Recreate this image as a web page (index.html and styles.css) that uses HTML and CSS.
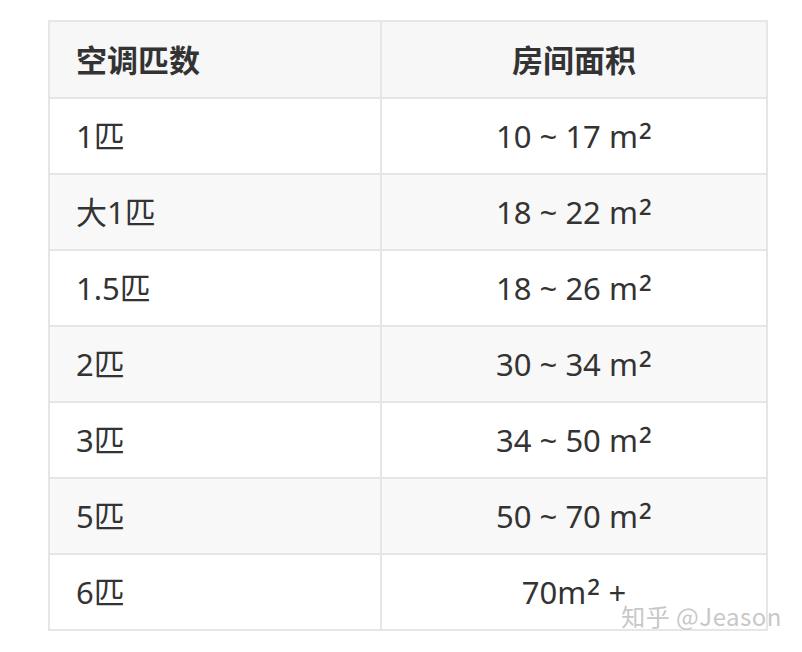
FILE: index.html
```html
<!DOCTYPE html>
<html lang="zh">
<head>
<meta charset="utf-8">
<link rel="stylesheet" href="styles.css">
</head>
<body>
<div class="wrap">
<table class="ac">
<thead>
<tr><th class="c1">空调匹数</th><th class="c2">房间面积</th></tr>
</thead>
<tbody>
<tr><td class="c1">1匹</td><td class="c2">10 ~ 17 m<span class="sq">²</span></td></tr>
<tr class="alt"><td class="c1">大1匹</td><td class="c2">18 ~ 22 m<span class="sq">²</span></td></tr>
<tr><td class="c1">1.5匹</td><td class="c2">18 ~ 26 m<span class="sq">²</span></td></tr>
<tr class="alt"><td class="c1">2匹</td><td class="c2">30 ~ 34 m<span class="sq">²</span></td></tr>
<tr><td class="c1">3匹</td><td class="c2">34 ~ 50 m<span class="sq">²</span></td></tr>
<tr class="alt"><td class="c1">5匹</td><td class="c2">50 ~ 70 m<span class="sq">²</span></td></tr>
<tr><td class="c1">6匹</td><td class="c2">70m<span class="sq">²</span> +</td></tr>
</tbody>
</table>
<div class="mark">知乎 @Jeason</div>
</div>
</body>
</html>
```
FILE: styles.css
```css
html, body {
  margin: 0;
  padding: 0;
  background: #ffffff;
}
body {
  padding: 20px 0 0 48px;
  font-family: "Noto Sans", "Noto Sans CJK SC", sans-serif;
  color: #333333;
}
.wrap {
  position: relative;
  width: 720px;
}
.ac {
  border-collapse: collapse;
  width: 720px;
  table-layout: fixed;
}
.ac th, .ac td {
  border: 2px solid #e6e6e6;
  height: 76px;
  padding: 0 26px;
  font-size: 31px;
  line-height: 40px;
  box-sizing: border-box;
}
.ac th {
  background: #f7f7f7;
  font-weight: 700;
  height: 77px;
}
.ac .c1 {
  width: 332px;
  text-align: left;
}
.ac .c2 {
  text-align: center;
}
.ac tr.alt td {
  background: #f8f8f8;
}
.sq {
  font-size: 1.2em;
  line-height: 0;
  vertical-align: -6px;
  margin-left: 1px;
}
.mark {
  position: absolute;
  right: -14px;
  bottom: -2px;
  font-family: "Noto Sans CJK SC", "Noto Sans", sans-serif;
  font-size: 24px;
  color: #c8c8c8;
  letter-spacing: 0.5px;
  text-shadow: 0 0 2px #ffffff;
}
```
